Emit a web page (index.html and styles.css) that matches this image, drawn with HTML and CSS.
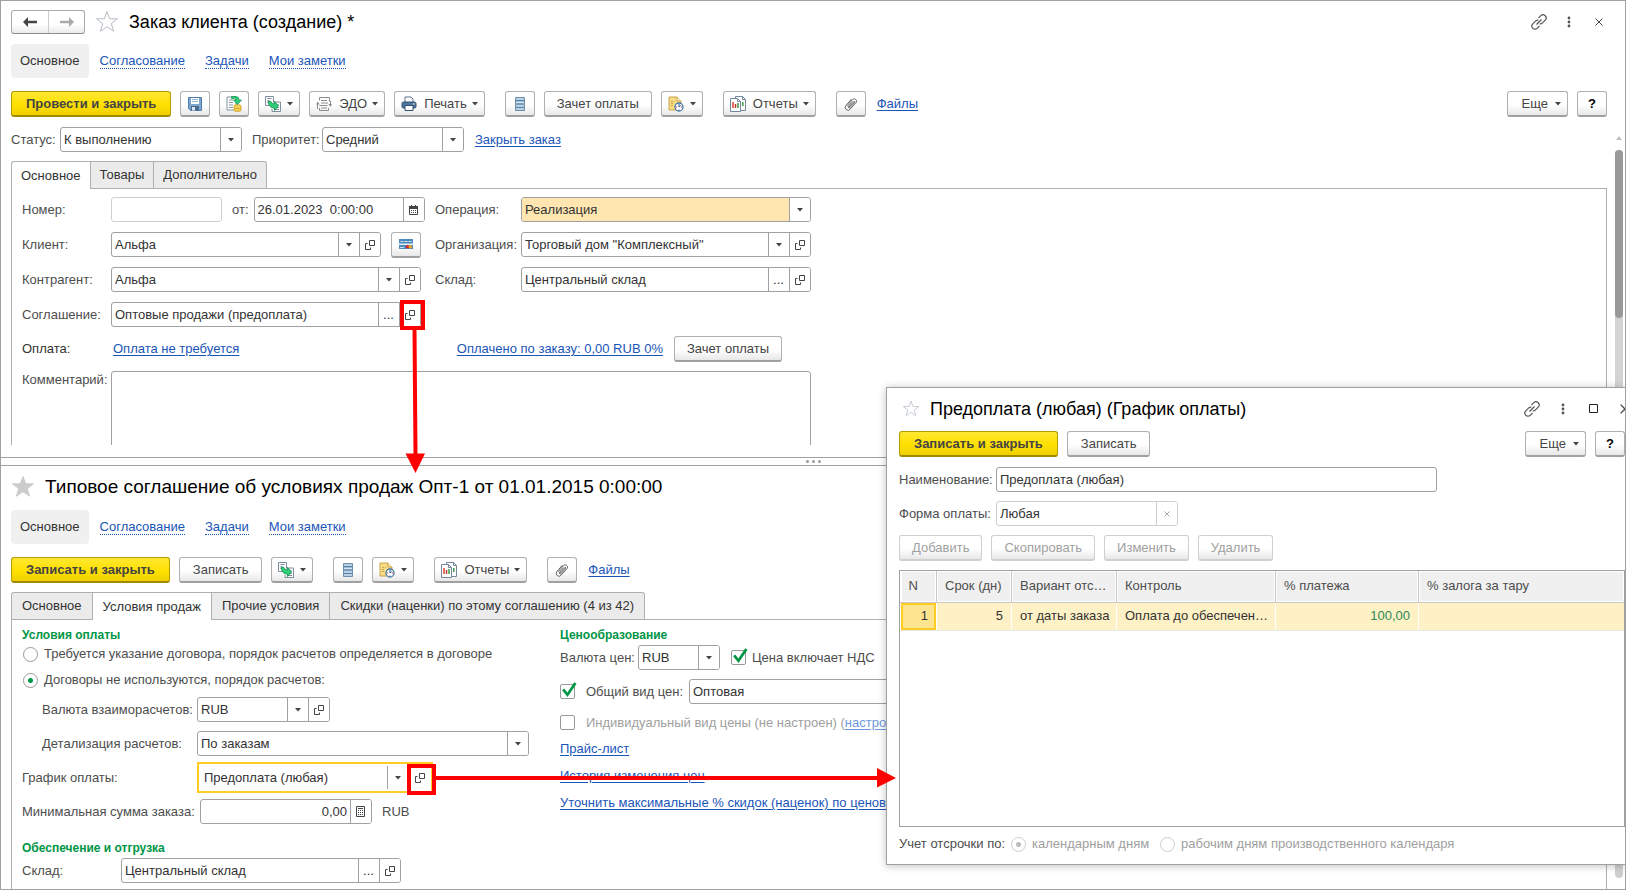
FILE: index.html
```html
<!DOCTYPE html>
<html lang="ru">
<head>
<meta charset="utf-8">
<title>Заказ клиента (создание) *</title>
<link rel="stylesheet" href="styles.css">
</head>
<body>
<svg class="defs" aria-hidden="true">
  <symbol id="i-down" viewBox="0 0 6 4"><path d="M0 0h6L3 3.500z" fill="#444"/></symbol>
  <symbol id="i-open" viewBox="0 0 10 10"><path d="M4.500.500h5v5h-5zM2.500 3.500h-2v6h5v-2" fill="none" stroke="#444"/></symbol>
  <symbol id="i-star" viewBox="0 0 24 23"><path d="M12 1.500l2.700 7.300h7.800l-6.200 4.800 2.300 7.600L12 16.700l-6.600 4.500 2.300-7.600L1.500 8.800h7.800z"/></symbol>
  <symbol id="i-link" viewBox="0 0 16 16"><g fill="none" stroke="#555" stroke-width="1.200"><path d="M7.500 4l2.300-2.300a2.900 2.900 0 0 1 4.400 4.400L11 9.300q-1 .900-2.300.600"/><path d="M8.500 12l-2.300 2.300a2.900 2.900 0 0 1-4.400-4.400L5 6.700q1-.900 2.300-.600"/><path d="M5.500 10.500l5-5"/></g></symbol>
  <symbol id="i-dots" viewBox="0 0 4 12"><g fill="#555"><circle cx="2" cy="2" r="1.400"/><circle cx="2" cy="6" r="1.400"/><circle cx="2" cy="10" r="1.400"/></g></symbol>
  <symbol id="i-x" viewBox="0 0 8 8"><path d="M.500.500l7 7M7.500.500l-7 7" stroke="#444" fill="none"/></symbol>
  <symbol id="i-save" viewBox="0 0 16 16"><path d="M1.500 1.500h13v13h-11l-2-2z" fill="#7fa5cf" stroke="#4f7dad"/><path d="M4 2h8v6H4z" fill="#fff"/><path d="M5 3.500h6M5 5.500h6" stroke="#9ab3cc"/><path d="M4 10h8v4.500H4z" fill="#4a6a8c"/><path d="M5 11h3v3.500H5z" fill="#dce6f0"/></symbol>
  <symbol id="i-post" viewBox="0 0 16 16"><path d="M1 1h9v13H1z" fill="#fff" stroke="#8494a3"/><path d="M3 4h4M3 6.500h4M3 9h4M3 11.500h4" stroke="#8494a3"/><path d="M8 9.500c0-1 7-1 7 0v5c0 1.300-7 1.300-7 0z" fill="#f2cf55" stroke="#c99a1d" stroke-width=".7"/><path d="M8 12c1 .8 6 .8 7 0" stroke="#c99a1d" stroke-width=".7" fill="none"/><path d="M5.500.500H10q3 0 3 3.500h2.500l-4 4.500L7.500 4H10q0-1.300-1.500-1.500h-3z" fill="#2fcf77" stroke="#128a4a" stroke-width=".7"/></symbol>
  <symbol id="i-based" viewBox="0 0 16 16"><path d="M.500.500h8v9h-8z" fill="#fff" stroke="#7f8f9f"/><path d="M2.500 2.500h4M2.500 4.500h2M2.500 6.500h1" stroke="#7f8f9f"/><path d="M8 6h7.500v9.500H7V13" fill="#fff" stroke="#7f8f9f"/><path d="M10 11.500h4M10 13.500h4M12 9h2" stroke="#7f8f9f"/><path d="M3 5.500h3q1 3 3.500 2.300V5.500l4 4.300-4 4.700v-2.300Q4 12 3 5.500z" fill="#2fcf77" stroke="#128a4a" stroke-width=".8"/></symbol>
  <symbol id="i-edo" viewBox="0 0 16 16"><g fill="none" stroke="#8c8c8c"><path d="M3.500 4.500v-3h10v4M3.500 12v2.500h9V12"/><path d="M5 4.500h6M5 7h7M3.500 9.500h8M5 12h6"/><path d="M1.500 13V8M14.500 10V5"/></g><path d="M0 8.500L1.800 5.500 3.600 8.500zM12.400 8l2 3 1.600-3z" fill="#8c8c8c"/></symbol>
  <symbol id="i-print" viewBox="0 0 16 16"><path d="M4 1h6l2 2v4H4z" fill="#fff" stroke="#5b7289"/><rect x="1" y="6" width="14" height="6" rx="1.500" fill="#4f769c" stroke="#2e4f70"/><path d="M4 9.500h8v5H4z" fill="#fff" stroke="#2e4f70"/><path d="M12 8h1.500" stroke="#fff"/></symbol>
  <symbol id="i-list" viewBox="0 0 10 14"><path d="M.500.500h9v13h-9z" fill="#9bbbd6" stroke="#6d8dab"/><path d="M1 2h8M1 5.500h8M1 9h8M1 12h8" stroke="#d7e6f2"/><path d="M1 3.500h8M1 7h8M1 10.500h8" stroke="#5f83a3"/></symbol>
  <symbol id="i-task" viewBox="0 0 16 16"><path d="M1 1h8l4 4v9H1z" fill="#f7dc86" stroke="#c9a44a"/><path d="M9 1v4h4" fill="#fff3c9" stroke="#c9a44a"/><path d="M3 5.500h4M3 7.500h3M3 9.500h3" stroke="#c9a44a" stroke-dasharray="2 1"/><circle cx="11" cy="11" r="4" fill="#fff" stroke="#4779a8" stroke-width="1.300"/><path d="M11 8v3l1.800-1.500M11 13.500v1" stroke="#2d5f90" fill="none"/><path d="M8 11h1M13 11h1" stroke="#d33"/></symbol>
  <symbol id="i-report" viewBox="0 0 16 16"><path d="M5.500.500h7l3 3v11h-10z" fill="#fff" stroke="#75879a"/><path d="M12.500.500v3h3" stroke="#75879a" fill="none"/><path d="M12.800 6v4" stroke="#3a9a48" stroke-width="1.500"/><path d="M.500 2.500h7l3 3v10H.500z" fill="#fff" stroke="#75879a"/><path d="M7.500 2.500v3h3" stroke="#75879a" fill="none"/><path d="M3 6v6" stroke="#e0452f" stroke-width="1.500"/><path d="M5.500 8v4" stroke="#b8402c" stroke-width="1.500"/><path d="M8 7v5" stroke="#3a9a48" stroke-width="1.500"/></symbol>
  <symbol id="i-clip" viewBox="0 0 14 14"><path d="M4.500 10.500L10.300 4.200M3 8.800l5.300-6a2.300 2.300 0 0 1 3.800 2.700L6.300 12a2.800 2.800 0 0 1-4.600-3.200L7.500 2M10.300 4.200q.900.900 0 1.800L5.800 10.800q-.900.500-1.300-.300t.300-1.700L8.500 4.600" fill="none" stroke="#666"/></symbol>
  <symbol id="i-card" viewBox="0 0 14 10"><path d="M0 0h14v10H0z" fill="#4c8cc0"/><path d="M0 4.500h14V6H0z" fill="#e6eef5"/><path d="M1.500 2.500h11" stroke="#cfe0ee" stroke-dasharray="3 1"/><circle cx="8.500" cy="7.800" r="1.800" fill="#d7262c"/><circle cx="11.300" cy="7.800" r="1.800" fill="#f2a51f"/><path d="M1 8.500h4" stroke="#cfe0ee"/></symbol>
  <symbol id="i-cal" viewBox="0 0 9 10"><path d="M.500 1.500h8v8h-8z" fill="#fff" stroke="#444"/><path d="M0 1h9v3H0z" fill="#444"/><path d="M2.500 0v2M6.500 0v2" stroke="#444"/><path d="M2 5.500h5M2 7.500h5" stroke="#444" stroke-dasharray="1 1"/></symbol>
  <symbol id="i-calc" viewBox="0 0 9 11"><path d="M.500.500h8v10h-8z" fill="#fff" stroke="#444"/><path d="M2 2.500h5" stroke="#444"/><path d="M2 4.500h5M2 6.500h5M2 8.500h5" stroke="#444" stroke-dasharray="1 1"/></symbol>
  <symbol id="i-check" viewBox="0 0 16 16"><path d="M3 7l4 5 7.500-11" fill="none" stroke="#009646" stroke-width="2.600"/></symbol>
</svg>

<main class="app">
  <section class="pane upper">
    <header class="titlebar">
      <div class="history">
        <button type="button" aria-label="Назад"><svg width="14" height="10" viewBox="0 0 14 10"><path d="M0 5l5-5v3.700h9v2.600H5V10z" fill="#444"/></svg></button>
        <button type="button" aria-label="Вперед"><svg width="14" height="10" viewBox="0 0 14 10"><path d="M14 5L9 0v3.700H0v2.600h9V10z" fill="#aaa"/></svg></button>
      </div>
      <svg class="star" width="24" height="23"><use href="#i-star"/></svg>
      <h1>Заказ клиента (создание) *</h1>
      <div class="window-tools">
        <button type="button" aria-label="Ссылка"><svg width="16" height="16"><use href="#i-link"/></svg></button>
        <button type="button" aria-label="Меню"><svg width="4" height="12"><use href="#i-dots"/></svg></button>
        <button type="button" aria-label="Закрыть"><svg width="8" height="8"><use href="#i-x"/></svg></button>
      </div>
    </header>
    <nav class="sections">
      <span class="current">Основное</span>
      <a href="#">Согласование</a>
      <a href="#">Задачи</a>
      <a href="#">Мои заметки</a>
    </nav>
    <div class="toolbar">
      <button type="button" class="btn primary">Провести и закрыть</button>
      <button type="button" class="btn icon" aria-label="Записать"><svg width="16" height="16"><use href="#i-save"/></svg></button>
      <button type="button" class="btn icon" aria-label="Провести"><svg width="16" height="16"><use href="#i-post"/></svg></button>
      <button type="button" class="btn icon-menu" aria-label="Создать на основании"><svg width="16" height="16"><use href="#i-based"/></svg><svg class="caret"><use href="#i-down"/></svg></button>
      <button type="button" class="btn menu"><svg width="16" height="16"><use href="#i-edo"/></svg>ЭДО<svg class="caret"><use href="#i-down"/></svg></button>
      <button type="button" class="btn menu"><svg width="16" height="16"><use href="#i-print"/></svg>Печать<svg class="caret"><use href="#i-down"/></svg></button>
      <button type="button" class="btn icon group" aria-label="Список"><svg width="10" height="14"><use href="#i-list"/></svg></button>
      <button type="button" class="btn snug">Зачет оплаты</button>
      <button type="button" class="btn icon-menu" aria-label="Задачи"><svg width="16" height="16"><use href="#i-task"/></svg><svg class="caret"><use href="#i-down"/></svg></button>
      <button type="button" class="btn menu group"><svg width="16" height="16"><use href="#i-report"/></svg>Отчеты<svg class="caret"><use href="#i-down"/></svg></button>
      <button type="button" class="btn icon group" aria-label="Прикрепить"><svg width="14" height="14"><use href="#i-clip"/></svg></button>
      <a href="#" class="files">Файлы</a>
      <button type="button" class="btn more">Еще<svg class="caret"><use href="#i-down"/></svg></button>
      <button type="button" class="btn icon help">?</button>
    </div>
    <div class="status-row">
      <label for="status">Статус:</label>
      <div class="field w-182"><select id="status"><option>К выполнению</option></select><span class="seg"><svg class="caret"><use href="#i-down"/></svg></span></div>
      <label for="priority" class="second">Приоритет:</label>
      <div class="field w-142"><select id="priority"><option>Средний</option></select><span class="seg"><svg class="caret"><use href="#i-down"/></svg></span></div>
      <a href="#">Закрыть заказ</a>
    </div>
    <div class="tabs" role="tablist">
      <button type="button" role="tab" class="active">Основное</button>
      <button type="button" role="tab">Товары</button>
      <button type="button" role="tab">Дополнительно</button>
    </div>
    <div class="panel order">
      <label for="num">Номер:</label>
      <div class="cell">
        <div class="field muted w-111"><input id="num" type="text" disabled></div>
        <label for="date">от:</label>
        <div class="field grow"><input id="date" type="text" value="26.01.2023  0:00:00"><button type="button" class="seg" aria-label="Календарь"><svg width="9" height="10"><use href="#i-cal"/></svg></button></div>
      </div>
      <label for="oper">Операция:</label>
      <div class="field filled"><select id="oper"><option>Реализация</option></select><span class="seg"><svg class="caret"><use href="#i-down"/></svg></span></div>

      <label for="client">Клиент:</label>
      <div class="cell">
        <div class="field w-270"><input id="client" type="text" value="Альфа"><button type="button" class="seg" aria-label="Выбрать"><svg class="caret"><use href="#i-down"/></svg></button><button type="button" class="seg" aria-label="Открыть"><svg width="10" height="10"><use href="#i-open"/></svg></button></div>
        <button type="button" class="btn icon card" aria-label="Карта"><svg width="14" height="10"><use href="#i-card"/></svg></button>
      </div>
      <label for="org">Организация:</label>
      <div class="field"><input id="org" type="text" value="Торговый дом &quot;Комплексный&quot;"><button type="button" class="seg" aria-label="Выбрать"><svg class="caret"><use href="#i-down"/></svg></button><button type="button" class="seg" aria-label="Открыть"><svg width="10" height="10"><use href="#i-open"/></svg></button></div>

      <label for="contr">Контрагент:</label>
      <div class="cell"><div class="field w-310"><input id="contr" type="text" value="Альфа"><button type="button" class="seg" aria-label="Выбрать"><svg class="caret"><use href="#i-down"/></svg></button><button type="button" class="seg" aria-label="Открыть"><svg width="10" height="10"><use href="#i-open"/></svg></button></div></div>
      <label for="store">Склад:</label>
      <div class="field"><input id="store" type="text" value="Центральный склад"><button type="button" class="seg">...</button><button type="button" class="seg" aria-label="Открыть"><svg width="10" height="10"><use href="#i-open"/></svg></button></div>

      <label for="agree">Соглашение:</label>
      <div class="cell wide"><div class="field w-310"><input id="agree" type="text" value="Оптовые продажи (предоплата)"><button type="button" class="seg">...</button><button type="button" class="seg" aria-label="Открыть"><svg width="10" height="10"><use href="#i-open"/></svg></button></div></div>

      <span>Оплата:</span>
      <div class="payment wide">
        <a href="#">Оплата не требуется</a>
        <a href="#" class="paid">Оплачено по заказу: 0,00 RUB 0%</a>
        <button type="button" class="btn snug">Зачет оплаты</button>
      </div>

      <label for="comment" class="top">Комментарий:</label>
      <textarea id="comment" class="wide"></textarea>
    </div>
    <div class="scroll top-bar"><b></b><div><i></i></div></div>
  </section>

  <div class="splitter"><i></i><i></i><i></i></div>

  <section class="pane lower">
    <header class="titlebar">
      <svg class="star on" width="24" height="23"><use href="#i-star"/></svg>
      <h1>Типовое соглашение об условиях продаж Опт-1 от 01.01.2015 0:00:00</h1>
    </header>
    <nav class="sections">
      <span class="current">Основное</span>
      <a href="#">Согласование</a>
      <a href="#">Задачи</a>
      <a href="#">Мои заметки</a>
    </nav>
    <div class="toolbar">
      <button type="button" class="btn primary">Записать и закрыть</button>
      <button type="button" class="btn">Записать</button>
      <button type="button" class="btn icon-menu" aria-label="Создать на основании"><svg width="16" height="16"><use href="#i-based"/></svg><svg class="caret"><use href="#i-down"/></svg></button>
      <button type="button" class="btn icon group" aria-label="Список"><svg width="10" height="14"><use href="#i-list"/></svg></button>
      <button type="button" class="btn icon-menu" aria-label="Задачи"><svg width="16" height="16"><use href="#i-task"/></svg><svg class="caret"><use href="#i-down"/></svg></button>
      <button type="button" class="btn menu group"><svg width="16" height="16"><use href="#i-report"/></svg>Отчеты<svg class="caret"><use href="#i-down"/></svg></button>
      <button type="button" class="btn icon group" aria-label="Прикрепить"><svg width="14" height="14"><use href="#i-clip"/></svg></button>
      <a href="#" class="files">Файлы</a>
    </div>
    <div class="tabs" role="tablist">
      <button type="button" role="tab">Основное</button>
      <button type="button" role="tab" class="active">Условия продаж</button>
      <button type="button" role="tab">Прочие условия</button>
      <button type="button" role="tab">Скидки (наценки) по этому соглашению (4 из 42)</button>
    </div>
    <div class="panel terms">
      <div class="col">
        <h2>Условия оплаты</h2>
        <label class="option"><input type="radio" name="terms">Требуется указание договора, порядок расчетов определяется в договоре</label>
        <label class="option"><input type="radio" name="terms" checked>Договоры не используются, порядок расчетов:</label>
        <div class="row inset"><label for="cur">Валюта взаиморасчетов:</label><div class="field w-133"><input id="cur" type="text" value="RUB"><button type="button" class="seg" aria-label="Выбрать"><svg class="caret"><use href="#i-down"/></svg></button><button type="button" class="seg" aria-label="Открыть"><svg width="10" height="10"><use href="#i-open"/></svg></button></div></div>
        <div class="row inset"><label for="detail">Детализация расчетов:</label><div class="field w-332"><select id="detail"><option>По заказам</option></select><span class="seg"><svg class="caret"><use href="#i-down"/></svg></span></div></div>
        <div class="row focus-row"><label for="sched">График оплаты:</label><div class="field focused w-236"><input id="sched" type="text" value="Предоплата (любая)"><button type="button" class="seg" aria-label="Выбрать"><svg class="caret"><use href="#i-down"/></svg></button><button type="button" class="seg" aria-label="Открыть"><svg width="10" height="10"><use href="#i-open"/></svg></button></div></div>
        <div class="row sum-row"><label for="minsum">Минимальная сумма заказа:</label><div class="field w-172"><input id="minsum" class="num" type="text" value="0,00"><button type="button" class="seg" aria-label="Калькулятор"><svg width="9" height="11"><use href="#i-calc"/></svg></button></div><span class="unit">RUB</span></div>
        <h2 class="next">Обеспечение и отгрузка</h2>
        <div class="row store-row"><label for="store2">Склад:</label><div class="field w-280"><input id="store2" type="text" value="Центральный склад"><button type="button" class="seg">...</button><button type="button" class="seg" aria-label="Открыть"><svg width="10" height="10"><use href="#i-open"/></svg></button></div></div>
      </div>
      <div class="col prices">
        <h2>Ценообразование</h2>
        <div class="row"><label for="pcur">Валюта цен:</label><div class="field w-82"><select id="pcur"><option>RUB</option></select><span class="seg"><svg class="caret"><use href="#i-down"/></svg></span></div><label class="tick"><span class="box"><input type="checkbox" checked><svg><use href="#i-check"/></svg></span>Цена включает НДС</label></div>
        <div class="row"><label class="tick"><span class="box"><input type="checkbox" checked><svg><use href="#i-check"/></svg></span>Общий вид цен:</label><div class="field grow"><input type="text" aria-label="Общий вид цен" value="Оптовая"></div></div>
        <div class="row slim"><label class="tick off"><span class="box"><input type="checkbox"></span><span>Индивидуальный вид цены (не настроен) (<a href="#">настроить</a>)</span></label></div>
        <ul class="links">
          <li><a href="#">Прайс-лист</a></li>
          <li><a href="#">История изменения цен</a></li>
          <li><a href="#">Уточнить максимальные % скидок (наценок) по ценовым группам</a></li>
        </ul>
      </div>
    </div>
    <div class="scroll under"><i></i></div>
  </section>

  <section class="dialog" role="dialog" aria-label="График оплаты">
    <header class="titlebar">
      <svg class="star" width="18" height="17"><use href="#i-star"/></svg>
      <h1>Предоплата (любая) (График оплаты)</h1>
      <div class="window-tools">
        <button type="button" aria-label="Ссылка"><svg width="16" height="16"><use href="#i-link"/></svg></button>
        <button type="button" aria-label="Меню"><svg width="4" height="12"><use href="#i-dots"/></svg></button>
        <button type="button" aria-label="Развернуть"><svg width="9" height="9" viewBox="0 0 9 9"><path d="M.500.500h8v8h-8z" fill="none" stroke="#222"/></svg></button>
        <button type="button" aria-label="Закрыть"><svg width="10" height="10"><use href="#i-x"/></svg></button>
      </div>
    </header>
    <div class="toolbar">
      <button type="button" class="btn primary">Записать и закрыть</button>
      <button type="button" class="btn">Записать</button>
      <button type="button" class="btn more">Еще<svg class="caret"><use href="#i-down"/></svg></button>
      <button type="button" class="btn icon help">?</button>
    </div>
    <div class="row"><label for="name">Наименование:</label><div class="field w-441"><input id="name" type="text" value="Предоплата (любая)"></div></div>
    <div class="row"><label for="form">Форма оплаты:</label><div class="field muted w-182"><input id="form" type="text" value="Любая"><button type="button" class="seg" aria-label="Очистить"><svg class="clear" width="6" height="6"><use href="#i-x"/></svg></button></div></div>
    <div class="toolbar edit">
      <button type="button" class="btn snug" disabled>Добавить</button>
      <button type="button" class="btn snug" disabled>Скопировать</button>
      <button type="button" class="btn snug" disabled>Изменить</button>
      <button type="button" class="btn snug" disabled>Удалить</button>
    </div>
    <div class="grid">
      <table>
        <colgroup><col class="c-n"><col class="c-days"><col class="c-kind"><col class="c-ctl"><col class="c-pct"><col></colgroup>
        <thead><tr><th>N</th><th>Срок (дн)</th><th>Вариант отс…</th><th>Контроль</th><th>% платежа</th><th>% залога за тару</th></tr></thead>
        <tbody><tr><td class="num picked">1</td><td class="num">5</td><td>от даты заказа</td><td>Оплата до обеспечен…</td><td class="num money">100,00</td><td></td></tr></tbody>
      </table>
    </div>
    <div class="defer">
      <span>Учет отсрочки по:</span>
      <label class="option"><input type="radio" name="defer" checked disabled>календарным дням</label>
      <label class="option"><input type="radio" name="defer" disabled>рабочим дням производственного календаря</label>
    </div>
  </section>

  <svg class="callouts" width="900" height="800" viewBox="0 0 900 800" aria-hidden="true">
    <g fill="none" stroke="#f00" stroke-width="4">
      <rect x="402" y="302" width="21" height="26"/>
      <path d="M414.500 328L415.500 456"/>
      <rect x="409" y="766" width="25" height="27"/>
      <path d="M436 778H880"/>
    </g>
    <path d="M405.500 453.500h19.500l-9.500 19.500zM877 768v19.500l19-9.500z" fill="#f00"/>
  </svg>
</main>
</body>
</html>
```

FILE: styles.css
```css
* { box-sizing: border-box; }

body {
  margin: 0;
  background: #fff;
  color: #333;
  font: 13px/18px "Liberation Sans", Arial, sans-serif;
}

button, input, select, textarea {
  font: inherit;
  color: inherit;
  margin: 0;
}

svg { display: block; flex: none; }
a { color: #1a55b8; text-underline-offset: 2px; white-space: nowrap; }
label { color: #4d4d4d; white-space: nowrap; }
.defs { position: absolute; width: 0; height: 0; }
.caret { width: 6px; height: 4px; }

.app {
  position: relative;
  display: grid;
  grid-template-rows: minmax(0, 456fr) 9px minmax(0, 423fr);
  height: 100vh;
  border: 1px solid #a0a0a0;
  overflow: hidden;
}

.pane {
  position: relative;
  display: flex;
  flex-direction: column;
  min-height: 0;
  padding: 8px 18px 0 10px;
  overflow: hidden;
}
.pane.upper { padding-bottom: 12px; }

/* Title bar */
.titlebar { display: flex; align-items: center; height: 25px; flex: none; }
.titlebar h1 {
  margin: 0;
  color: #000;
  font-size: 18px;
  font-weight: 400;
  line-height: 24px;
  white-space: nowrap;
}
.lower .titlebar h1 { font-size: 19px; }
.history {
  display: flex;
  border: 1px solid #aaa;
  border-bottom-color: #8c8c8c;
  border-radius: 3px;
  background: linear-gradient(#fff 60%, #ebebeb);
}
.history button {
  display: grid;
  place-items: center;
  width: 36px;
  height: 22px;
  padding: 0;
  border: 0;
  background: none;
}
.history button + button { border-left: 1px solid #ccc; }
.star { margin: 0 10px; fill: #fff; stroke: #b5bcc4; }
.star.on { margin: 0 10px 0 0; fill: #ccc; stroke: #ccc; }
.window-tools { display: flex; gap: 10px; margin: 0 -2px 0 auto; }
.window-tools button {
  display: grid;
  place-items: center;
  width: 20px;
  height: 20px;
  padding: 0;
  border: 0;
  background: none;
}

/* Section links */
.sections { display: flex; align-items: center; gap: 19px; margin: 10px 0 13px; height: 34px; flex: none; }
.lower .sections { margin-top: 11px; }
.sections .current {
  margin-right: -8px;
  padding: 8px 9px;
  border-radius: 4px;
  background: #f0f0f0;
}
.sections a { line-height: 15px; text-decoration: none; border-bottom: 1px dotted #1a55b8; }
.sections a + a { margin-left: 1px; }

/* Buttons */
.toolbar { display: flex; align-items: center; gap: 9px; height: 26px; flex: none; }
.btn {
  display: flex;
  align-items: center;
  justify-content: center;
  height: 26px;
  padding: 0 13px;
  border: 1px solid #b0b0b0;
  border-bottom: 2px solid #a0a0a0;
  border-radius: 3px;
  background: linear-gradient(#fff 55%, #e8e8e8);
  color: #444;
  white-space: nowrap;
}
.btn.primary {
  padding: 0 14px;
  border-color: #b39b00;
  border-bottom-color: #a08a00;
  background: linear-gradient(#ffe833, #ffe000 55%, #f0d000);
  font-weight: 700;
}
.btn.snug { padding: 0 12px; }
.btn.icon { width: 30px; padding: 0; }
.btn.icon-menu { gap: 6px; width: 42px; padding: 0; }
.btn.menu { gap: 7px; padding: 0 6px; }
.btn.menu .caret { margin-left: -2px; }
.btn.more { gap: 7px; margin-left: auto; padding: 0 6px 0 14px; }
.btn.help { color: #000; font-weight: 700; }
.btn.group { margin-left: 11px; }
.btn:disabled { border-color: #d0d0d0; color: #a0a0a0; }
.files { margin-left: 2px; }

/* Fields */
.field {
  display: flex;
  height: 25px;
  flex: none;
  border: 1px solid #a0a0a0;
  border-radius: 3px;
  background: #fff;
  color: #333;
  overflow: hidden;
}
.field input, .field select {
  flex: 1;
  min-width: 0;
  width: 0;
  height: 100%;
  padding: 0 3px;
  border: 0;
  outline: 0;
  background: none;
  appearance: none;
  white-space: pre;
}
.field .num { text-align: right; }
.field.muted { border-color: #d0d0d0; }
.field.muted .seg { border-color: #d0d0d0; }
.field.muted .clear { opacity: 0.6; }
.field.filled select { background: #ffe6b0; }
.seg {
  display: grid;
  place-items: center;
  flex: none;
  width: 21px;
  padding: 0 1px 0 0;
  border: 0;
  border-left: 1px solid #a0a0a0;
  background: #fff;
}
.field.grow { flex: 1; }
.w-82 { width: 82px; }
.w-111 { width: 111px; }
.w-133 { width: 133px; }
.w-142 { width: 142px; }
.w-172 { width: 172px; }
.w-182 { width: 182px; }
.w-236 { width: 236px; }
.w-270 { width: 270px; }
.w-280 { width: 280px; }
.w-310 { width: 310px; }
.w-332 { width: 332px; }
.w-441 { width: 441px; }

.status-row { display: flex; align-items: center; flex: none; margin-top: 10px; }
.status-row label { width: 49px; }
.status-row .second { width: 70px; margin-left: 10px; }
.status-row a { margin-left: 11px; }

/* Tabs */
.tabs { display: flex; flex: none; margin-top: 9px; }
.tabs button {
  height: 27px;
  padding: 0 9px;
  border: 1px solid #b0b0b0;
  border-width: 1px 0 0 1px;
  background: #ebebeb;
  color: #333;
}
.lower .tabs button { padding: 0 10px; }
.tabs button:first-child { border-top-left-radius: 3px; }
.tabs button:last-child { border-right-width: 1px; border-top-right-radius: 3px; }
.tabs .active { position: relative; height: 28px; margin-bottom: -1px; background: #fff; }
.panel { flex: 1; min-height: 0; border: 1px solid #b0b0b0; border-bottom: 0; overflow: hidden; }

/* Order form */
.order {
  display: grid;
  grid-template-columns: 89px 324px 86px 290px;
  grid-template-rows: repeat(4, 25px) 24px 140px;
  align-content: start;
  align-items: center;
  row-gap: 10px;
  padding: 8px 10px 0;
}
.order .cell { display: flex; align-items: center; gap: 5px; margin-right: 10px; }
.cell > label, .cell > .btn { margin-left: 5px; }
.order .wide { grid-column: 2 / -1; }
.payment { display: flex; align-items: center; height: 24px; padding-left: 2px; }
.payment .paid { margin-left: auto; }
.payment .btn { margin: 0 29px 0 11px; }
.order .top { align-self: start; }
.order textarea {
  height: 100%;
  border: 1px solid #a0a0a0;
  border-radius: 3px;
  resize: none;
}

/* Scroll bars */
.scroll { position: absolute; right: 2px; width: 8px; }
.scroll i { display: block; border-radius: 4px; background: #999; }
.top-bar { top: 135px; bottom: 0; display: flex; flex-direction: column; }
.top-bar b {
  width: 6px;
  height: 4px;
  margin: 0 1px 10px;
  background: #c0c0c0;
  clip-path: polygon(50% 0, 100% 100%, 0 100%);
}
.top-bar div { flex: 1; border-radius: 4px 4px 0 0; background: #d4d4d4; }
.top-bar i { height: 168px; }
.scroll.under { bottom: 11px; }
.scroll.under i { height: 60px; background: #d0d0d0; }

.splitter {
  display: flex;
  align-items: center;
  justify-content: center;
  gap: 3px;
  border: solid #a0a0a0;
  border-width: 1px 0;
}
.splitter i { width: 3px; height: 3px; border-radius: 50%; background: #999; }

/* Agreement form */
.terms { display: grid; grid-template-columns: 538px minmax(0, 1fr); padding: 6px 10px 0; }
.col { display: flex; flex-direction: column; }
h2 { margin: 0; color: #009646; font-size: 12px; font-weight: 700; line-height: 18px; }
.option { display: flex; align-items: center; gap: 6px; height: 20px; }
.option + .option { margin: 6px 0 7px; }
input[type="radio"] {
  appearance: none;
  width: 15px;
  height: 15px;
  margin: 0 0 0 1px;
  border: 1px solid #999;
  border-radius: 50%;
  background: #fff;
}
input[type="radio"]:checked { background: radial-gradient(circle, #009646 2px, #fff 3px); }
input[type="radio"]:disabled { border-color: #ccc; }
input[type="radio"]:disabled:checked { background: radial-gradient(circle, #bbb 2px, #fff 3px); }
.row { display: flex; align-items: center; height: 25px; flex: none; }
.row + .row { margin-top: 9px; }
.col .row > label:first-child { width: 175px; }
.col .inset > label:first-child { width: 155px; }
.col .inset { padding-left: 20px; }
.col .focus-row { height: 31px; margin: 6px 0; }
.col .sum-row { margin-top: 0; }
.col .sum-row > label:first-child { width: 178px; }
.unit { margin-left: 10px; color: #4d4d4d; }
.focused { height: 31px; padding: 2px 0 2px 2px; border: 2px solid #ffcc22; border-radius: 0; }
.focused .seg + .seg { border-color: transparent; width: 23px; }
.next { margin-top: 15px; }
.next + .row { margin-top: 1px; }
.col .store-row > label:first-child { width: 99px; }
.prices h2 { margin-bottom: 1px; }
.col.prices .row > label:first-child { width: 78px; }
.col.prices .row > .tick:first-child { width: 129px; }
.tick { display: flex; align-items: center; gap: 11px; }
.field + .tick { gap: 6px; margin-left: 11px; }
.box { position: relative; flex: none; width: 15px; height: 15px; }
.box input {
  display: block;
  appearance: none;
  width: 15px;
  height: 15px;
  border: 1px solid #999;
  border-radius: 2px;
  background: #fff;
}
.box svg { position: absolute; inset: -2px auto auto 0; width: 17px; height: 17px; pointer-events: none; }
.row.slim { height: 19px; }
.tick.off { color: #a0a0a0; }
.off a { color: #6d97dd; }
.links { display: grid; gap: 9px; margin: 8px 0 0; padding: 0; list-style: none; }

/* Payment schedule window */
.dialog {
  position: absolute;
  top: 386px;
  right: 0;
  bottom: 24px;
  left: 885px;
  display: flex;
  flex-direction: column;
  padding: 8px 0 10px 12px;
  border: 1px solid #a0a0a0;
  border-right: 0;
  background: #fff;
  box-shadow: 0 1px 8px rgba(0, 0, 0, 0.25);
  overflow: hidden;
}
.dialog .star { margin: 0 10px 0 3px; }
.dialog .window-tools { gap: 12px; margin-right: -9px; }
.dialog .window-tools button { width: 19px; }
.dialog .toolbar { margin: 10px 0; }
.dialog .row > label { width: 97px; }
.dialog .row + .row { margin-top: 9px; }
.dialog .edit { margin: 9px 0; }
.grid { flex: 1; min-height: 0; border: 1px solid #a0a0a0; }
table { width: 100%; border-collapse: collapse; table-layout: fixed; }
th, td {
  padding: 0 4px 0 8px;
  font-weight: 400;
  text-align: left;
  white-space: nowrap;
}
th {
  height: 31px;
  border: 1px solid #c8c8c8;
  border-width: 0 0 1px 1px;
  background: #f0f0f0;
  box-shadow: inset 0 0 0 1px #fff;
  color: #4d4d4d;
}
th:first-child { border-left: 0; }
td { height: 28px; border-left: 1px solid #fff; border-bottom: 1px solid #e8e8e8; background: #fff1c6; }
td.num { padding-right: 8px; text-align: right; }
td.picked { box-shadow: inset 0 0 0 2px #ffcc22; background: #ffe490; }
.money { color: #2e8b57; }
.c-n { width: 36px; }
.c-days { width: 75px; }
.c-kind { width: 105px; }
.c-ctl { width: 159px; }
.c-pct { width: 143px; }
.defer { display: flex; align-items: center; gap: 10px; margin-top: 7px; height: 20px; flex: none; color: #4d4d4d; }
.defer .option { margin: 0 0 0 -5px; color: #a0a0a0; }
.defer .option + .option { margin-left: 0; }

/* Red frames and arrows drawn over the windows */
.callouts { position: absolute; top: -1px; left: -1px; pointer-events: none; }
```
